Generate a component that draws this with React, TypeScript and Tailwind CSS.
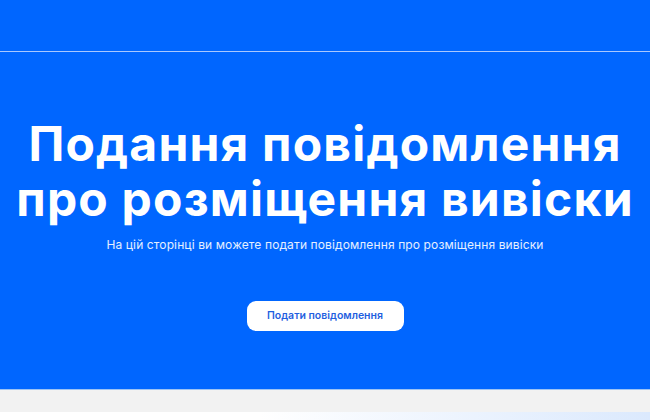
export default function App() {
  return (
    <div className="w-[650px] h-[420px] overflow-hidden bg-white" style={{ fontFamily: 'Inter, "Noto Sans", sans-serif' }}>
      {/* шапка */}
      <div className="h-[52px] bg-[#0066ff] border-b border-[#a9c8ff]"></div>

      {/* головний блок */}
      <section className="h-[337px] bg-[#0066ff] flex flex-col items-center pt-[64px]">
        <h1 className="text-[48px] leading-[55px] font-bold text-white text-center tracking-[0.025em]">
          Подання повідомлення
          <br />
          про розміщення вивіски
        </h1>
        <p className="mt-[11px] text-[12px] leading-[16px] text-white/90 tracking-[0.01em]">
          На цій сторінці ви можете подати повідомлення про розміщення вивіски
        </p>
        <button className="mt-[48px] w-[157px] h-[30px] rounded-[9px] bg-white text-[#1f5fe0] text-[10.5px] font-semibold">
          Подати повідомлення
        </button>
      </section>

      <div className="h-[1px] bg-[#9cc3f5]"></div>
      <div className="h-[22px] bg-[#f2f2f2]"></div>
      <div className="h-[10px] bg-gradient-to-r from-white from-40% to-[#dbe9fd]"></div>
    </div>
  );
}
